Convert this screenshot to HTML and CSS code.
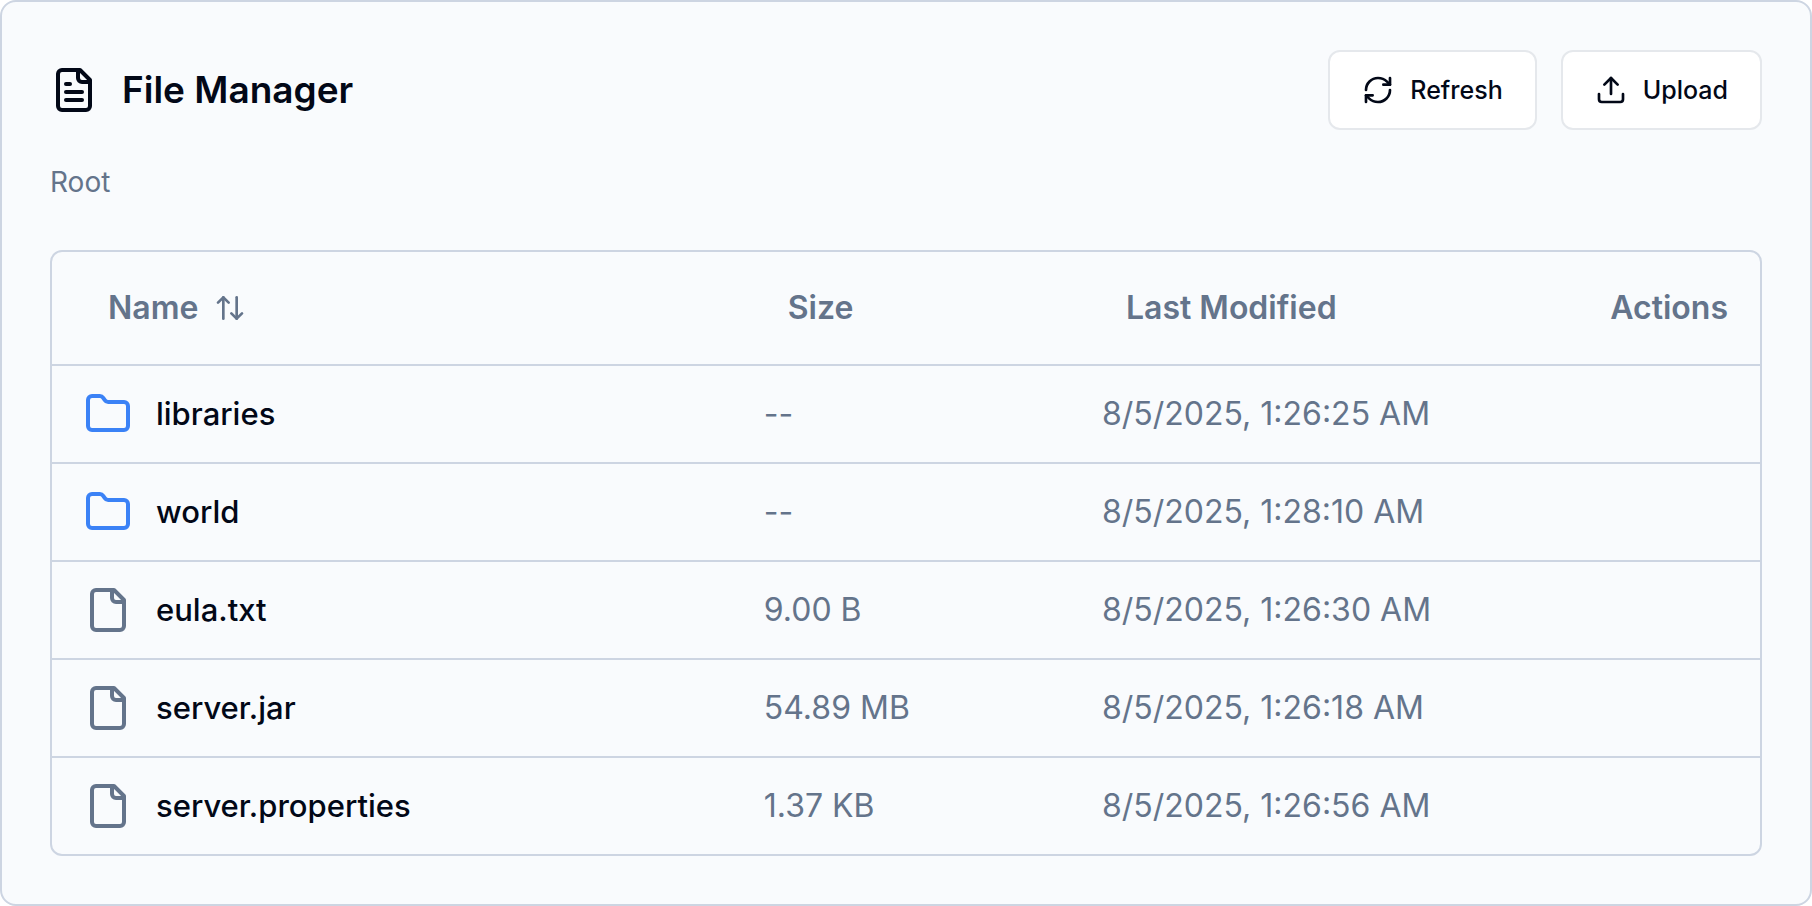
FILE: index.html
```html
<!DOCTYPE html>
<html lang="en">
<head>
<meta charset="utf-8">
<meta name="viewport" content="width=device-width, initial-scale=1">
<title>File Manager</title>
<link rel="stylesheet" href="styles.css">
</head>
<body>
<svg class="sprite" aria-hidden="true">
  <symbol id="folder" viewBox="0 0 24 24"><path d="M20 20a2 2 0 0 0 2-2V8a2 2 0 0 0-2-2h-7.9a2 2 0 0 1-1.69-.9L9.6 3.9A2 2 0 0 0 7.93 3H4a2 2 0 0 0-2 2v13a2 2 0 0 0 2 2Z"/></symbol>
  <symbol id="file" viewBox="0 0 24 24"><path d="M15 2H6a2 2 0 0 0-2 2v16a2 2 0 0 0 2 2h12a2 2 0 0 0 2-2V7Z"/><path d="M14 2v4a2 2 0 0 0 2 2h4"/></symbol>
</svg>
<main class="card">
  <header class="header">
    <h1 class="title">
      <svg class="icon icon-lg" viewBox="0 0 24 24" aria-hidden="true"><path d="M15 2H6a2 2 0 0 0-2 2v16a2 2 0 0 0 2 2h12a2 2 0 0 0 2-2V7Z"/><path d="M14 2v4a2 2 0 0 0 2 2h4"/><path d="M10 9H8"/><path d="M16 13H8"/><path d="M16 17H8"/></svg>
      File Manager
    </h1>
    <div class="actions">
      <button class="button" type="button">
        <svg class="icon icon-sm" viewBox="0 0 24 24" aria-hidden="true"><path d="M3 12a9 9 0 0 1 9-9 9.75 9.75 0 0 1 6.74 2.74L21 8"/><path d="M21 3v5h-5"/><path d="M21 12a9 9 0 0 1-9 9 9.75 9.75 0 0 1-6.74-2.74L3 16"/><path d="M8 16H3v5"/></svg>
        Refresh
      </button>
      <button class="button" type="button">
        <svg class="icon icon-sm" viewBox="0 0 24 24" aria-hidden="true"><path d="M21 15v4a2 2 0 0 1-2 2H5a2 2 0 0 1-2-2v-4"/><path d="m17 8-5-5-5 5"/><path d="M12 3v12"/></svg>
        Upload
      </button>
    </div>
  </header>
  <nav class="breadcrumb" aria-label="Path"><a class="crumb" href="#">Root</a></nav>
  <div class="table-frame">
    <table class="files">
      <colgroup><col class="col-name"><col class="col-size"><col class="col-modified"><col></colgroup>
      <thead>
        <tr>
          <th scope="col"><button class="sort" type="button">Name
            <svg class="icon icon-sm" viewBox="0 0 24 24" aria-hidden="true"><path d="m21 16-4 4-4-4"/><path d="M17 20V4"/><path d="m3 8 4-4 4 4"/><path d="M7 4v16"/></svg></button></th>
          <th scope="col"><button class="sort" type="button">Size</button></th>
          <th scope="col"><button class="sort" type="button">Last Modified</button></th>
          <th scope="col" class="end">Actions</th>
        </tr>
      </thead>
      <tbody>
        <tr><td><a class="entry" href="#"><svg class="icon icon-lg folder" aria-hidden="true"><use href="#folder"/></svg>libraries</a></td><td>--</td><td>8/5/2025, 1:26:25 AM</td><td></td></tr>
        <tr><td><a class="entry" href="#"><svg class="icon icon-lg folder" aria-hidden="true"><use href="#folder"/></svg>world</a></td><td>--</td><td>8/5/2025, 1:28:10 AM</td><td></td></tr>
        <tr><td><a class="entry" href="#"><svg class="icon icon-lg file" aria-hidden="true"><use href="#file"/></svg>eula.txt</a></td><td>9.00 B</td><td>8/5/2025, 1:26:30 AM</td><td></td></tr>
        <tr><td><a class="entry" href="#"><svg class="icon icon-lg file" aria-hidden="true"><use href="#file"/></svg>server.jar</a></td><td>54.89 MB</td><td>8/5/2025, 1:26:18 AM</td><td></td></tr>
        <tr><td><a class="entry" href="#"><svg class="icon icon-lg file" aria-hidden="true"><use href="#file"/></svg>server.properties</a></td><td>1.37 KB</td><td>8/5/2025, 1:26:56 AM</td><td></td></tr>
      </tbody>
    </table>
  </div>
</main>
</body>
</html>
```
FILE: styles.css
```css
:root {
  --background: #f9fbfd;
  --foreground: #020817;
  --muted: #64748b;
  --border: #cdd5e2;
}
* { box-sizing: border-box; }
body {
  margin: 0;
  background: #fff;
  color: var(--foreground);
  font-family: Inter, "Liberation Sans", sans-serif;
}
button { font-family: inherit; cursor: pointer; }
.sprite { display: none; }
.card {
  padding: 48px;
  background: var(--background);
  border: 2px solid var(--border);
  border-radius: 16px;
}
.icon {
  flex: none;
  fill: none;
  stroke: currentColor;
  stroke-width: 2;
  stroke-linecap: round;
  stroke-linejoin: round;
}
.icon-lg { width: 48px; height: 48px; }
.icon-sm { width: 32px; height: 32px; }
.folder { color: #3b82f6; }
.file { color: var(--muted); }
.header {
  display: flex;
  align-items: center;
  justify-content: space-between;
}
.title {
  display: flex;
  align-items: center;
  gap: 24px;
  margin: 0;
  font-size: 37px;
  font-weight: 600;
  line-height: 48px;
}
.actions { display: flex; gap: 24px; }
.button {
  display: flex;
  align-items: center;
  gap: 16px;
  height: 80px;
  padding: 0 32px;
  background: #fff;
  border: 2px solid #e5e8ec;
  border-radius: 12px;
  color: var(--foreground);
  font-size: 25px;
  font-weight: 500;
}
.breadcrumb {
  margin: 32px 0 48px;
  font-size: 28px;
  line-height: 40px;
}
.crumb { color: var(--muted); text-decoration: none; }
.table-frame {
  border: 2px solid var(--border);
  border-radius: 12px;
}
.files {
  width: 100%;
  table-layout: fixed;
  border-collapse: separate;
  border-spacing: 0;
  color: var(--muted);
  font-size: 32px;
  line-height: 48px;
}
.col-name { width: 39.8%; }
.col-size { width: 19.8%; }
.col-modified { width: 26%; }
th, td {
  padding: 24px 32px;
  text-align: left;
  white-space: nowrap;
  border-bottom: 2px solid var(--border);
}
th {
  padding: 32px;
  font-weight: 600;
}
tbody tr:last-child td { border-bottom: 0; }
th.end { text-align: right; }
.sort {
  display: flex;
  align-items: center;
  gap: 16px;
  padding: 0 24px;
  background: none;
  border: 0;
  color: inherit;
  font-size: inherit;
  font-weight: inherit;
  line-height: inherit;
}
.entry {
  display: flex;
  align-items: center;
  gap: 24px;
  color: var(--foreground);
  font-size: 31px;
  font-weight: 500;
  text-decoration: none;
}
```
